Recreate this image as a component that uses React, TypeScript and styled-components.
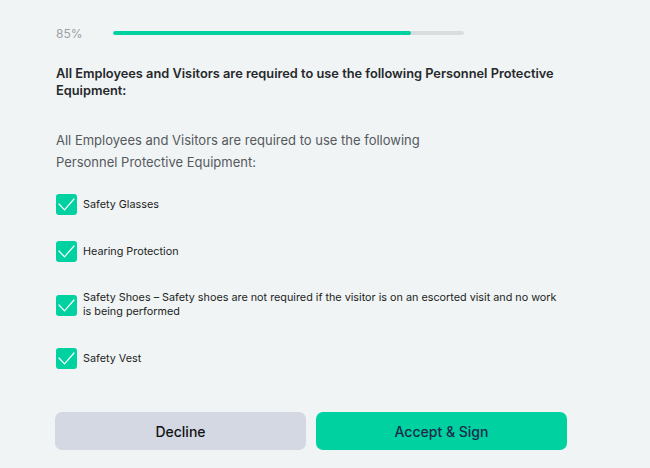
import styled, { createGlobalStyle } from 'styled-components';

const GlobalStyle = createGlobalStyle`
  html, body {
    margin: 0;
    padding: 0;
    background: #f0f4f5;
    font-family: Inter, "Noto Sans", sans-serif;
  }
`;

interface Item {
  id: number;
  label: string;
}

const items: Item[] = [
  { id: 1, label: 'Safety Glasses' },
  { id: 2, label: 'Hearing Protection' },
  {
    id: 3,
    label:
      'Safety Shoes – Safety shoes are not required if the visitor is on an escorted visit and no work is being performed',
  },
  { id: 4, label: 'Safety Vest' },
];

const progress = 85;

function CheckIcon() {
  return (
    <svg width="21" height="21" viewBox="0 0 21 21" fill="none">
      <path
        d="M3 10 L8.5 15.8 L18 5"
        stroke="#ffffff"
        strokeWidth="1.2"
        strokeLinecap="round"
        strokeLinejoin="round"
      />
    </svg>
  );
}

export default function App() {
  return (
    <>
      <GlobalStyle />
      <Page>
        <ProgressRow>
          <Percent>{progress}%</Percent>
          <Track>
            <Fill style={{ width: `${progress}%` }} />
          </Track>
        </ProgressRow>

        <Heading>
          All Employees and Visitors are required to use the following Personnel
          Protective Equipment:
        </Heading>

        <Intro>
          All Employees and Visitors are required to use the following Personnel
          Protective Equipment:
        </Intro>

        <CheckList>
          {items.map((item) => (
            <CheckRow key={item.id}>
              <Box>
                <CheckIcon />
              </Box>
              <Label>{item.label}</Label>
            </CheckRow>
          ))}
        </CheckList>

        <Actions>
          <Button>Decline</Button>
          <Button primary>Accept &amp; Sign</Button>
        </Actions>
      </Page>
    </>
  );
}

const Page = styled.div`
  width: 512px;
  padding: 23px 0 0 55px;
`;

const ProgressRow = styled.div`
  display: flex;
  align-items: center;
  height: 20px;
  width: 409px;
`;

const Percent = styled.span`
  width: 57px;
  padding-left: 1px;
  font-size: 12px;
  color: #9c9fa3;
`;

const Track = styled.div`
  flex: 1;
  height: 4px;
  border-radius: 2px;
  background: #d8dde0;
  overflow: hidden;
`;

const Fill = styled.div`
  height: 100%;
  border-radius: 2px;
  background: #00d1a0;
`;

const Heading = styled.h2`
  margin: 22px 0 0 1px;
  font-size: 12.8px;
  line-height: 17px;
  font-weight: 600;
  color: #26282b;
`;

const Intro = styled.p`
  margin: 30px 0 0 1px;
  max-width: 400px;
  font-size: 13px;
  line-height: 22px;
  color: #55595d;
`;

const CheckList = styled.div`
  display: flex;
  flex-direction: column;
  gap: 26px;
  margin-top: 21px;
`;

const CheckRow = styled.div`
  display: flex;
  align-items: center;
  gap: 6px;
  padding-left: 1px;
`;

const Box = styled.span`
  flex: none;
  display: flex;
  align-items: center;
  justify-content: center;
  width: 21px;
  height: 21px;
  border-radius: 3px;
  background: #00d1a0;
`;

const Label = styled.span`
  padding: 3px 0;
  max-width: 485px;
  font-size: 10.8px;
  line-height: 14px;
  color: #1c1e22;
`;

const Actions = styled.div`
  display: grid;
  grid-template-columns: 1fr 1fr;
  gap: 10px;
  margin-top: 43px;
`;

const Button = styled.button<{ primary?: boolean }>`
  height: 38px;
  border: none;
  border-radius: 7px;
  font-family: Inter, "Noto Sans", sans-serif;
  font-size: 14px;
  font-weight: 500;
  background: ${({ primary }) => (primary ? '#00d1a0' : '#d4d8e2')};
  color: ${({ primary }) => (primary ? '#1c2b4a' : '#111214')};
  cursor: pointer;
`;
